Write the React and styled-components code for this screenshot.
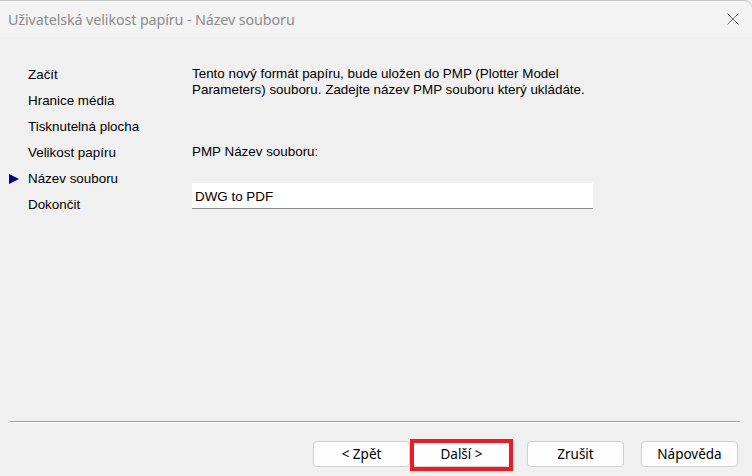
import React from "react";
import styled, { createGlobalStyle } from "styled-components";

const Global = createGlobalStyle`
  html, body { margin: 0; padding: 0; background: #f0f0f0; }
  body { width: 752px; height: 476px; overflow: hidden; }
  * { box-sizing: border-box; }
`;

const Window = styled.div`
  width: 752px;
  height: 476px;
  display: flex;
  flex-direction: column;
  background: #f0f0f0;
  font-family: "Liberation Sans", Arial, sans-serif;
  font-size: 13.4px;
  color: #000;
`;

const TitleBar = styled.div`
  height: 37px;
  flex: none;
  display: flex;
  align-items: center;
  justify-content: space-between;
  padding: 0 13px 0 8px;
  background: #f3f3f3;
  border-top: 1px solid #c4c4c4;
  border-top-right-radius: 8px;
`;

const Title = styled.span`
  font-family: "Noto Sans", "Open Sans", sans-serif;
  font-size: 14.3px;
  color: #8c8c8c;
  letter-spacing: -0.1px;
`;

const Close = styled.svg`
  width: 12px;
  height: 12px;
  display: block;
`;

const Main = styled.div`
  flex: 1;
  display: grid;
  grid-template-columns: 192px 1fr;
`;

const Nav = styled.ul`
  list-style: none;
  margin: 0;
  padding: 25px 0 0 9px;
`;

const NavItem = styled.li`
  display: flex;
  align-items: center;
  height: 26px;
  line-height: 26px;
`;

const Marker = styled.span`
  width: 19px;
  flex: none;
  display: flex;
  align-items: center;
`;

const Content = styled.div`
  display: flex;
  flex-direction: column;
  padding-top: 29px;
  padding-right: 159px;
`;

const Para = styled.p`
  margin: 0;
  line-height: 16px;
`;

const Label = styled.div`
  margin-top: 46px;
  line-height: 16px;
`;

const Input = styled.div`
  margin-top: 23px;
  height: 26px;
  width: 401px;
  background: #fff;
  border-bottom: 1px solid #8a8a8a;
  display: flex;
  align-items: center;
  padding-left: 3px;
  padding-top: 1px;
`;

const Footer = styled.div`
  flex: none;
  display: flex;
  flex-direction: column;
`;

const Separator = styled.div`
  margin: 0 12px 0 10px;
  height: 2px;
  border-top: 1px solid #a0a0a0;
  border-bottom: 1px solid #ffffff;
`;

const ButtonRow = styled.div`
  display: flex;
  justify-content: flex-end;
  padding: 18px 14px 9px 0;
`;

const Button = styled.button`
  position: relative;
  width: 97px;
  height: 26px;
  margin-left: ${(p) => p.$gap}px;
  background: #fdfdfd;
  border: 1px solid #d0d0d0;
  border-radius: 4px;
  font-family: "Noto Sans", "Open Sans", sans-serif;
  font-size: 13.5px;
  color: #000;
  padding: 0;

  &::after {
    content: "";
    display: ${(p) => (p.$highlight ? "block" : "none")};
    position: absolute;
    left: -4px;
    right: -4px;
    top: -3px;
    bottom: -5px;
    border: 4px solid #ec1c24;
  }
`;

const items = [
  "Začít",
  "Hranice média",
  "Tisknutelná plocha",
  "Velikost papíru",
  "Název souboru",
  "Dokončit",
];

export default function App() {
  return (
    <>
      <Global />
      <Window>
        <TitleBar>
          <Title>Uživatelská velikost papíru - Název souboru</Title>
          <Close viewBox="0 0 12 12">
            <path d="M0.5 0.5 L11.5 11.5 M11.5 0.5 L0.5 11.5" stroke="#6e6e6e" strokeWidth="1" fill="none" />
          </Close>
        </TitleBar>
        <Main>
          <Nav>
            {items.map((t) => (
              <NavItem key={t}>
                <Marker>
                  {t === "Název souboru" && (
                    <svg width="10" height="10" viewBox="0 0 10 10">
                      <polygon points="0,0 10,5 0,10" fill="#000080" />
                    </svg>
                  )}
                </Marker>
                {t}
              </NavItem>
            ))}
          </Nav>
          <Content>
            <Para>
              Tento nový formát papíru, bude uložen do PMP (Plotter Model Parameters) souboru. Zadejte název PMP souboru který ukládáte.
            </Para>
            <Label>PMP Název souboru:</Label>
            <Input>DWG to PDF</Input>
          </Content>
        </Main>
        <Footer>
          <Separator />
          <ButtonRow>
            <Button $gap={0}>&lt; Zpět</Button>
            <Button $gap={3} $highlight>Další &gt;</Button>
            <Button $gap={17}>Zrušit</Button>
            <Button $gap={17}>Nápověda</Button>
          </ButtonRow>
        </Footer>
      </Window>
    </>
  );
}
